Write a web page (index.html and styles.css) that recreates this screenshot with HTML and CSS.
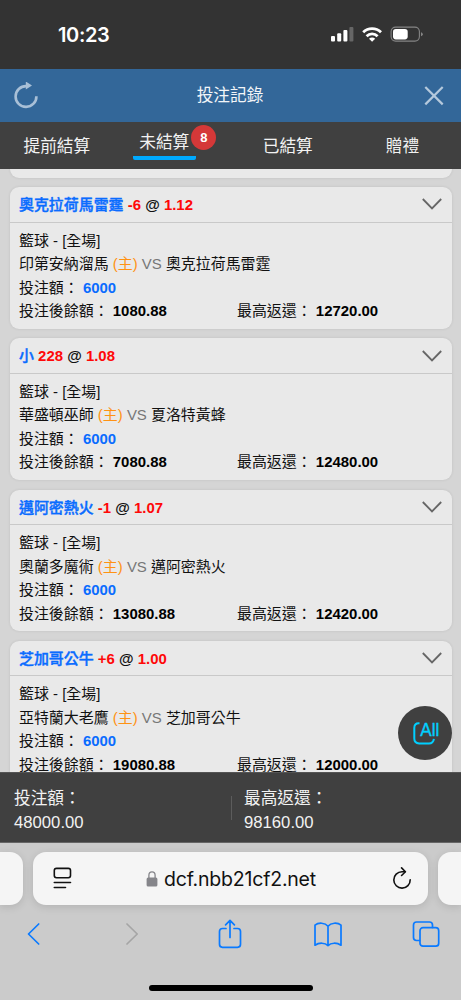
FILE: index.html
```html
<!DOCTYPE html>
<html lang="zh-Hant">
<head>
<meta charset="utf-8">
<meta name="viewport" content="width=device-width">
<title>投注記錄</title>
<link rel="stylesheet" href="styles.css">
</head>
<body>
<div class="phone">
  <div class="status">
    <span class="time">10:23</span>
    <svg class="status-icons" width="96" height="22" viewBox="0 0 96 22">
      <g fill="#fff">
        <rect x="1" y="13" width="4" height="5.5" rx="1"/>
        <rect x="7.2" y="10.3" width="4" height="8.2" rx="1"/>
        <rect x="13.4" y="7" width="4" height="11.5" rx="1"/>
        <rect x="19.4" y="4" width="4" height="14.5" rx="1" opacity=".25"/>
      </g>
      <g fill="none" stroke="#fff" stroke-width="2.8">
        <path d="M33.2 9.3a12.6 12.6 0 0 1 17.8 0"/>
        <path d="M36.6 13.2a7.8 7.8 0 0 1 11 0"/>
      </g>
      <path fill="#fff" d="M39 15.7a4.4 4.4 0 0 1 6.2 0l-3.1 3.1z"/>
      <rect x="61.1" y="4.1" width="28.3" height="14" rx="4.5" fill="none" stroke="#858585" stroke-width="1.1"/>
      <rect x="63" y="6" width="14.7" height="10.4" rx="2.8" fill="#fff"/>
      <path fill="#858585" d="M91 9.2q1.8.6 1.8 2t-1.8 2z"/>
    </svg>
  </div>
  <header class="titlebar">
    <svg width="26" height="28" viewBox="0 0 26 28">
      <path d="M13.3 4.1A10.4 10.4 0 1 0 23.4 14.2" fill="none" stroke="#a9c0d7" stroke-width="2.6"/>
      <path d="M12.8 -.5v8.1l6.200-4z" fill="#a9c0d7"/>
    </svg>
    <h1>投注記錄</h1>
    <svg width="20" height="20" viewBox="0 0 20 20"><path d="M1.300 1l17.400 17.400M18.700 1L1.300 18.400" stroke="#b5c9dc" stroke-width="2.200"/></svg>
  </header>
  <nav class="tabs">
    <span class="tab">提前結算</span>
    <span class="tab active"><span class="label">未結算<b class="badge">8</b></span></span>
    <span class="tab">已結算</span>
    <span class="tab">贈禮</span>
  </nav>
  <main class="list">
    <section class="bet tail"></section>
    <section class="bet">
      <h2><span><span class="pick">奧克拉荷馬雷霆</span> <em>-6</em> @ <em>1.12</em></span><svg class="chev" width="20" height="12" viewBox="0 0 20 12"><path d="M.8 1l9.2 9.400L19.200 1"/></svg></h2>
      <div class="body">
        <p>籃球 - [全場]</p>
        <p>印第安納溜馬 <span class="home">(主)</span> <span class="vs">VS</span> 奧克拉荷馬雷霆</p>
        <p>投注額： <b class="stake">6000</b></p>
        <p class="cols"><span>投注後餘額： <b>1080.88</b></span><span>最高返還： <b>12720.00</b></span></p>
      </div>
    </section>
    <section class="bet">
      <h2><span><span class="pick">小</span> <em>228</em> @ <em>1.08</em></span><svg class="chev" width="20" height="12" viewBox="0 0 20 12"><path d="M.8 1l9.2 9.400L19.200 1"/></svg></h2>
      <div class="body">
        <p>籃球 - [全場]</p>
        <p>華盛頓巫師 <span class="home">(主)</span> <span class="vs">VS</span> 夏洛特黃蜂</p>
        <p>投注額： <b class="stake">6000</b></p>
        <p class="cols"><span>投注後餘額： <b>7080.88</b></span><span>最高返還： <b>12480.00</b></span></p>
      </div>
    </section>
    <section class="bet">
      <h2><span><span class="pick">邁阿密熱火</span> <em>-1</em> @ <em>1.07</em></span><svg class="chev" width="20" height="12" viewBox="0 0 20 12"><path d="M.8 1l9.2 9.400L19.200 1"/></svg></h2>
      <div class="body">
        <p>籃球 - [全場]</p>
        <p>奧蘭多魔術 <span class="home">(主)</span> <span class="vs">VS</span> 邁阿密熱火</p>
        <p>投注額： <b class="stake">6000</b></p>
        <p class="cols"><span>投注後餘額： <b>13080.88</b></span><span>最高返還： <b>12420.00</b></span></p>
      </div>
    </section>
    <section class="bet">
      <h2><span><span class="pick">芝加哥公牛</span> <em>+6</em> @ <em>1.00</em></span><svg class="chev" width="20" height="12" viewBox="0 0 20 12"><path d="M.8 1l9.2 9.400L19.200 1"/></svg></h2>
      <div class="body">
        <p>籃球 - [全場]</p>
        <p>亞特蘭大老鷹 <span class="home">(主)</span> <span class="vs">VS</span> 芝加哥公牛</p>
        <p>投注額： <b class="stake">6000</b></p>
        <p class="cols"><span>投注後餘額： <b>19080.88</b></span><span>最高返還： <b>12000.00</b></span></p>
      </div>
    </section>
    <div class="fab">
      <svg width="54" height="54" viewBox="0 0 54 54">
        <path d="M21.500 17.300h-.8q-4.400 0-4.400 4.600v10.700q0 4.800 4.800 4.800h9.800q4.400 0 5-4.600" fill="none" stroke="#00cfff" stroke-width="2"/>
        <text x="22.300" y="29.800" textLength="19" lengthAdjust="spacingAndGlyphs">All</text>
      </svg>
    </div>
  </main>
  <footer class="totals">
    <div>投注額：<br>48000.00</div>
    <div>最高返還：<br>98160.00</div>
  </footer>
  <div class="safari">
    <div class="urls">
      <div class="side left"></div>
      <div class="url">
        <svg width="20" height="24" viewBox="0 0 20 24" fill="none" stroke="#111" stroke-width="1.600" stroke-linecap="round"><rect x="1.300" y="1.400" width="16.200" height="9.400" rx="2.200"/><path d="M1.300 15.500H17.500M1.300 20.500H12.500"/></svg>
        <div class="domain">
          <svg width="12" height="16" viewBox="0 0 12 16"><rect x=".6" y="6.600" width="10.800" height="8.900" rx="1.500" fill="#85858a"/><path d="M2.900 7V4.200a3.100 3.400 0 0 1 6.200 0V7" fill="none" stroke="#85858a" stroke-width="1.300"/></svg>
          <span>dcf.nbb21cf2.net</span>
        </div>
        <svg width="20" height="24" viewBox="0 0 20 24" fill="none" stroke="#111" stroke-width="1.600" stroke-linecap="round" stroke-linejoin="round"><path d="M13 4.700H10A8.200 8.200 0 1 0 18.200 12.700"/><path d="M9.600 .9l3.800 3.800-3.800 3.800"/></svg>
      </div>
      <div class="side right"></div>
    </div>
    <div class="tools">
      <span><svg width="14" height="30" viewBox="0 0 14 30"><path d="M12.700 5L2.500 15l10.200 10"/></svg></span>
      <span class="off"><svg width="14" height="30" viewBox="0 0 14 30"><path d="M3 5L13.200 15 3 25"/></svg></span>
      <span><svg width="24" height="30" viewBox="0 0 24 30"><path d="M8 9.500H4.500Q1.500 9.500 1.500 12.500V25.300Q1.500 28.300 4.500 28.300H19.500Q22.500 28.300 22.500 25.300V12.500Q22.500 9.500 19.500 9.500H16M12 18.500V1.500M7.600 5.800l4.400-4.400 4.400 4.400"/></svg></span>
      <span><svg width="30" height="30" viewBox="0 0 30 30"><path d="M15 7.200C12 3.600 5.500 3.200 2 6.200V26.200C6 23.500 12 23.500 15 26.600 18 23.500 24 23.500 28 26.200V6.200C24.500 3.200 18 3.600 15 7.200zV26.600"/></svg></span>
      <span><svg width="28" height="30" viewBox="0 0 28 30"><rect x="8" y="8.700" width="18.700" height="18.500" rx="3"/><path d="M7.500 21.500H4.500Q1.500 21.500 1.500 18.500V6Q1.500 3 4.500 3H17.500Q20.500 3 20.500 6V8.500"/></svg></span>
    </div>
    <div class="homebar"></div>
  </div>
</div>
</body>
</html>
```
FILE: styles.css
```css
* { box-sizing: border-box; }
body { margin: 0; font-family: "Liberation Sans", "Noto Sans CJK TC", sans-serif; }
.phone { width: 461px; height: 1000px; display: flex; flex-direction: column; overflow: hidden; background: #d5d5d5; }
.status { height: 69px; flex: none; background: #333; color: #fff; display: flex; justify-content: space-between; align-items: center; padding: 0 31px 0 58px; }
.time { font: 600 20px/24px Inter, sans-serif; letter-spacing: -.35px; }
.status-icons { display: block; margin: -1px 4px 0 0; }
.titlebar { height: 53px; flex: none; background: #336799; color: #f2f5f8; display: flex; justify-content: space-between; align-items: center; padding: 0 17px 0 13px; }
.titlebar h1 { margin: 0; font-weight: 400; font-size: 16.700px; line-height: 24px; padding-right: 3px; }
.titlebar svg { display: block; }
.tabs { height: 47px; flex: none; background: #404040; color: #f2f2f2; display: flex; align-items: flex-start; padding: 13px 0 0 23.500px; font-size: 16.700px; line-height: 24px; }
.tab { white-space: nowrap; }
.active { width: 62.500px; margin: -4px 67px 0 43px; padding: 0 6px; height: 28.500px; border-bottom: 4px solid #00aaff; border-radius: 0 0 2px 2px; }
.active + .tab { margin-right: 73px; }
.label { position: relative; }
.badge { position: absolute; left: 52px; top: -8px; width: 25px; height: 25px; border-radius: 50%; background: #d53838; color: #fff; font: bold 13px/25px "Liberation Sans", sans-serif; text-align: center; }
.list { flex: 1; min-height: 0; overflow: hidden; position: relative; padding: 0 9.500px; display: flex; flex-direction: column; gap: 9.500px; font-size: 14.950px; }
.bet { flex: none; height: 141.800px; background: #e9e9e9; border-radius: 9px; box-shadow: 0 0 3px rgba(0,0,0,.1); color: #111; }
.tail { height: 8.500px; border-radius: 0 0 9px 9px; }
.bet h2 { margin: 0; height: 35.500px; border-bottom: 1px solid #c9c9c9; padding: 0 9.500px; font-size: 14.950px; line-height: 35px; white-space: nowrap; display: flex; }
.bet h2 em { font-style: normal; color: #ff0808; }
.pick { color: #0a6cff; font-weight: 500; -webkit-text-stroke: .4px #0a6cff; }
.chev { margin-left: auto; align-self: center; fill: none; stroke: #666; stroke-width: 1.800; }
.body { padding: 6px 9.500px 0; }
.body p { margin: 0; line-height: 23.500px; white-space: nowrap; }
.body b { color: #000; }
.body .stake { color: #0a6cff; }
.home { color: #ff9213; }
.vs { color: #777; }
.cols { display: grid; grid-template-columns: 218px 1fr; }
.fab { position: absolute; left: 397.500px; top: 537px; width: 54px; height: 54px; border-radius: 50%; background: #404040; }
.fab svg { display: block; }
.fab text { font: 18.500px "Liberation Sans", sans-serif; fill: #00cfff; stroke: #00cfff; stroke-width: .4; }
.totals { height: 71px; flex: none; background: #404040; color: #f2f2f2; display: grid; grid-template-columns: 217px 1fr; font-size: 16.700px; line-height: 24px; padding: 14px 0 0 14px; border-bottom: 1px solid #666; border-top: 1px solid #555; }
.totals div + div { padding-left: 13px; background: linear-gradient(#5c5c5c, #5c5c5c) 0 9px / 1px 24px no-repeat; }
.safari { height: 157px; flex: none; background: #cbcbcb; }
.urls { height: 62px; padding-top: 9px; display: flex; justify-content: space-between; }
.side, .url { height: 53px; background: #f5f5f5; box-shadow: 0 2px 9px rgba(0,0,0,.12); }
.side { width: 23px; }
.left { border-radius: 0 13px 13px 0; }
.right { border-radius: 13px 0 0 13px; }
.url { width: 395px; border-radius: 13px; display: flex; justify-content: space-between; align-items: center; padding: 0 16px 0 20px; }
.domain { display: flex; align-items: center; gap: 6px; margin-right: 3px; font: 19.500px/24px Inter, sans-serif; letter-spacing: -.2px; color: #111; }
.tools { height: 30px; margin: 14px -14px 0 -16px; display: flex; fill: none; stroke: #0a7aff; stroke-width: 1.700; stroke-linecap: round; stroke-linejoin: round; }
.tools span { flex: 1; display: flex; justify-content: center; }
.tools .off { stroke: #a5a5a5; }
.homebar { width: 164px; height: 6px; border-radius: 3px; background: #000; margin: 36px auto 0; }
```
